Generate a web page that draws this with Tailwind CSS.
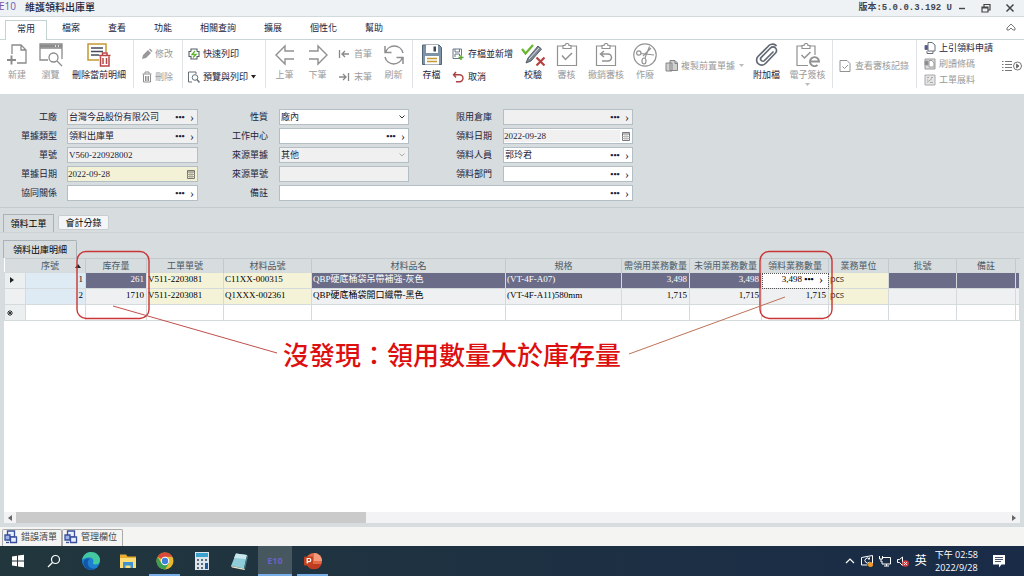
<!DOCTYPE html>
<html lang="zh-Hant">
<head>
<meta charset="utf-8">
<title>維護領料出庫單</title>
<script src="https://cdn.jsdelivr.net/npm/@tailwindcss/browser@4"></script>
</head>
<body class="relative flex h-screen flex-col overflow-hidden bg-[#d7dcde] font-['Liberation_Serif','Noto_Sans_CJK_TC',sans-serif] text-[9px] leading-3 text-[#22233a]">

<!-- Title bar -->
<header class="flex h-[17px] shrink-0 items-center border-b border-[#d3dadc] bg-[#eef2f4]">
  <span class="-ml-px mb-1 w-[26px] font-['Open_Sans'] text-[10px] text-[#6a5cae]">E10</span>
  <h1 class="text-[10px] font-medium">維護領料出庫單</h1>
  <span class="ml-auto whitespace-pre font-['Liberation_Mono','Noto_Sans_CJK_TC',monospace] font-bold text-[#44454f]">版本:5.0.0.3.192 U</span>
  <div class="ml-1 mr-2 flex items-center gap-3 text-[#444]">
    <button aria-label="最小化"><svg class="size-3" viewBox="0 0 12 12" fill="none" stroke="currentColor" stroke-width="1.4"><path d="M3 6.500h6"/></svg></button>
    <button aria-label="還原"><svg class="size-3" viewBox="0 0 12 12" fill="none" stroke="currentColor" stroke-width="1.2"><path d="M2 5h6v5H2zM4 5V2.500h6V8H8M2 5.800h6"/></svg></button>
    <button aria-label="關閉"><svg class="size-3" viewBox="0 0 12 12" fill="none" stroke="currentColor" stroke-width="1.5"><path d="M2.500 2.500l7 7M9.500 2.500l-7 7"/></svg></button>
  </div>
</header>

<!-- Ribbon tabs -->
<nav class="flex h-[23px] shrink-0 items-stretch border-b border-[#c9d5d7] bg-white pl-[5px] pr-2">
  <button class="-mb-px mt-[3px] w-[42px] border border-b-0 border-[#c3d3d0] bg-white pb-[3px]">常用</button>
  <div class="ml-[15px] flex items-center gap-7">
    <button>檔案</button><button>查看</button><button>功能</button><button>相關查詢</button><button>擴展</button><button>個性化</button><button>幫助</button>
  </div>
  <button class="ml-auto" aria-label="收合功能區"><svg class="h-3 w-2.5" viewBox="0 0 10 12" fill="none" stroke="#777" stroke-width="1"><path d="M1 6l4-4 4 4v2L7 8 5 6 3 8 1 8z"/></svg></button>
</nav>

<!-- Ribbon -->
<div class="flex h-[54px] shrink-0 items-start overflow-hidden whitespace-nowrap bg-white">
  <button class="flex w-[34px] flex-col items-center gap-0.5 pt-[3px] text-[#9a9a9a]">
    <svg class="size-6" viewBox="0 0 24 24" fill="none" stroke="#8b8b8b" stroke-width="1.300"><path d="M7 11V2h9l5 5v13H12M16 2v5h5"/><path d="M2 17h9M6.500 12.500v9" stroke-width="1.900"/></svg>新建</button>
  <button class="flex w-[33px] flex-col items-center gap-0.5 pt-[3px] text-[#9a9a9a]">
    <svg class="size-6" viewBox="0 0 24 24" fill="none" stroke="#8b8b8b" stroke-width="1.300"><path d="M9 17H1V1h22v15M1 5h22"/><path d="M1 3h22" stroke-width="3"/><path d="M16 3h1M19 3h1" stroke="#fff"/><circle cx="14.500" cy="14.500" r="4.500"/><path d="M18 18l5 5"/></svg>瀏覽</button>
  <button class="flex w-[64px] flex-col items-center gap-0.5 pt-[3px]">
    <svg class="size-6" viewBox="0 0 24 24" fill="none"><path d="M12 17H1V1h18v8" stroke="#c49a35" stroke-width="1.500"/><path d="M4 5h12M4 8.500h12M4 12h8" stroke="#454b5c" stroke-width="1.400"/><path d="M12 12.500h11.500M15.500 12v-2h4.500v2M13.500 13.500v9.500h8.500v-9.500M16 15v6M19.500 15v6" stroke="#b84545" stroke-width="1.500"/></svg>刪除當前明細</button>
  <i class="ml-[2px] h-12 w-px bg-[#e0e3e5]"></i>
  <div class="ml-[7px] flex w-[41px] flex-col items-start gap-[11px] pt-2 text-[#9a9a9a]">
    <button class="flex h-3 items-center gap-0.5"><svg class="size-3" viewBox="0 0 12 12" fill="#999"><path d="M1 11l1-4 5-5 3 3-5 5zM8 1.500l1-1 2.500 2.500-1 1z"/></svg>修改</button>
    <button class="flex h-3 items-center gap-0.5"><svg class="size-3" viewBox="0 0 12 12" fill="none" stroke="#8d8d8d"><path d="M1.500 3h9M4 2.500V1h4v1.500M2.500 3.500v7.500h7V3.500M4.500 5v5M6 5v5M7.500 5v5"/></svg>刪除</button>
  </div>
  <i class="h-12 w-px bg-[#e0e3e5]"></i>
  <div class="ml-[5px] flex w-[77px] flex-col items-start gap-[11px] pt-2">
    <button class="flex h-3 items-center gap-[3px]"><svg class="size-3" viewBox="0 0 12 12" fill="none" stroke="#555e68" stroke-width="1.100"><path d="M3 3.500V1h6v2.500M3 3.500H1v5h2V11h6V8.500h2v-5H9"/><path d="M7 3L4 6.500h4L5 9.500" stroke="#62b32e" stroke-width="1.300"/></svg>快速列印</button>
    <button class="flex h-3 items-center gap-[3px]"><svg class="size-3" viewBox="0 0 12 12" fill="none" stroke="#666e75"><path d="M4 11H.500V1H8v2"/><circle cx="7" cy="6.500" r="2.800"/><path d="M9 8.500l2.500 3" stroke-width="1.500"/></svg>預覽與列印<svg class="h-1 w-[5px]" viewBox="0 0 5 4"><path d="M0 0h5L2.500 3.500z" fill="#222"/></svg></button>
  </div>
  <i class="h-12 w-px bg-[#e0e3e5]"></i>
  <button class="ml-[2px] flex w-[33px] flex-col items-center gap-0.5 pt-[3px] text-[#9a9a9a]">
    <svg class="size-6" viewBox="0 0 24 24" fill="none" stroke="#919191" stroke-width="1.400"><path d="M21 8h-9V3L3 12l9 9v-5h9"/></svg>上筆</button>
  <button class="flex w-[33px] flex-col items-center gap-0.5 pt-[3px] text-[#9a9a9a]">
    <svg class="size-6" viewBox="0 0 24 24" fill="none" stroke="#919191" stroke-width="1.400"><path d="M3 8h9V3l9 9-9 9v-5H3"/></svg>下筆</button>
  <div class="ml-[4px] flex w-[41px] flex-col items-start gap-[11px] pt-2 text-[#9a9a9a]">
    <button class="flex h-3 items-center gap-1"><svg class="size-3" viewBox="0 0 12 12" fill="none" stroke="#888" stroke-width="1.300"><path d="M1.500 2v8M11 6H4M7 3L4 6l3 3"/></svg>首筆</button>
    <button class="flex h-3 items-center gap-1"><svg class="size-3" viewBox="0 0 12 12" fill="none" stroke="#888" stroke-width="1.300"><path d="M10.500 2v8M1 6h7M5 3l3 3-3 3"/></svg>末筆</button>
  </div>
  <button class="flex w-[29px] flex-col items-center gap-0.5 pt-[3px] text-[#9a9a9a]">
    <svg class="size-6" viewBox="0 0 24 24" fill="none" stroke="#8f8f8f" stroke-width="1.500"><path d="M3.500 10a9 9 0 0 1 17.500 0M20.500 14a9 9 0 0 1-17.500 0M3 3v6.500h6.500M21 21v-6.500h-6.500"/></svg>刷新</button>
  <i class="ml-[4px] h-12 w-px bg-[#e0e3e5]"></i>
  <button class="flex w-[37px] flex-col items-center gap-0.5 pt-[3px]">
    <svg class="size-6" viewBox="0 0 24 24"><path d="M2.500 2h16.500l2.500 2.500V21.500h-19z" fill="#7d93a8" stroke="#536577"/><path d="M6 2h12v8H6zM5 13h14v8.500H5z" fill="#fff"/><path d="M13.500 3.500h2.500v5h-2.500z" fill="#3e4658"/><path d="M7 15.500h10M7 18.500h10" stroke="#c49a35" stroke-width="1.300"/></svg>存檔</button>
  <div class="ml-[2px] flex w-[66px] flex-col items-start gap-[11px] pt-2">
    <button class="flex h-3 items-center gap-1"><svg class="size-3" viewBox="0 0 12 12" fill="none" stroke="#6a7888"><path d="M8 10.500H1V1h8.500v6M3 1v3h4.500V1M3 9V6h4.500v2"/><path d="M9 7v5M6.500 9.500h5" stroke="#58a82c" stroke-width="1.500"/></svg>存檔並新增</button>
    <button class="flex h-3 items-center gap-1"><svg class="size-3" viewBox="0 0 12 12" fill="none" stroke="#ad4040" stroke-width="1.400"><path d="M4 1L1.500 3.700 4 6.500M2 3.700h5.500a3.500 3.500 0 0 1 0 7H4"/></svg>取消</button>
  </div>
  <button class="flex w-[30px] flex-col items-center gap-0.5 pt-[3px]">
    <svg class="size-6" viewBox="0 0 24 24" fill="none"><path d="M5 20l2-5L17 3l3.500 3L10 18z" fill="#7c8794" stroke="#56606d"/><path d="M8 16L18 5" stroke="#dce1e5"/><path d="M1 6l3.500 4.500L12 2" stroke="#68b52f" stroke-width="2.200"/><path d="M15.500 14.500l8 8M23.500 14.500l-8 8" stroke="#b64141" stroke-width="2.200"/></svg>校驗</button>
  <button class="flex w-[37px] flex-col items-center gap-0.5 pt-[3px] text-[#9a9a9a]">
    <svg class="size-6" viewBox="0 0 24 24" fill="none" stroke="#929292" stroke-width="1.200"><path d="M8 3H2.500v19.500h19V3H16M8 2.500h2a2 2 0 0 1 4 0h2v3H8z"/><path d="M7 12.500l3.500 4 6.500-6.500" stroke-width="1.500"/></svg>審核</button>
  <button class="flex w-[42px] flex-col items-center gap-0.5 pt-[3px] text-[#9a9a9a]">
    <svg class="size-6" viewBox="0 0 24 24" fill="none" stroke="#929292" stroke-width="1.200"><path d="M8 3H2.500v19.500h19V3H16M8 2.500h2a2 2 0 0 1 4 0h2v3H8z"/><path d="M10 8l-3.500 3 3.500 3M7 11h7a3.500 3.500 0 0 1 0 7H8" stroke-width="1.500"/></svg>撤銷審核</button>
  <button class="flex w-[36px] flex-col items-center gap-0.5 pt-[3px] text-[#9a9a9a]">
    <svg class="size-6" viewBox="0 0 24 24" fill="none" stroke="#929292" stroke-width="1.200"><circle cx="12" cy="12" r="11.200"/><circle cx="5.800" cy="10" r="2.200"/><ellipse cx="11" cy="18" rx="2" ry="3"/><path d="M8 10.500l13 1.500M12 15L16.500 3.500M10 13l8-8"/></svg>作廢</button>
  <button class="ml-0.5 mt-5 flex h-3 w-[85px] items-center gap-0.5 text-[#9a9a9a]"><svg class="size-3.5" viewBox="0 0 14 14" fill="#d0d0d0" stroke="#858585"><path d="M1 4h6v8H1zM5 1.500h5l2.500 2.500v7.500H5z"/><path d="M10 2v2.500h2.500" fill="none"/></svg>複製前置單據<svg class="ml-0.5 h-1 w-[5px]" viewBox="0 0 5 4"><path d="M0 0h5L2.500 3z" fill="#bbb"/></svg></button>
  <button class="flex w-[33px] flex-col items-center gap-0.5 pt-[3px]">
    <svg class="size-6" viewBox="0 0 24 24" fill="none" stroke="#606873" stroke-width="1.700" stroke-linecap="round"><path d="M18 9l-8.500 8.500a2.200 2.200 0 0 1-3.200-3.200L15.500 5a3.500 3.500 0 0 1 5 5l-10 10.500a5 5 0 0 1-7.500-7L13 3.500a5.500 5.500 0 0 1 8-1"/></svg>附加檔</button>
  <button class="flex w-[49px] flex-col items-center gap-0.5 pt-[3px] text-[#9a9a9a]">
    <svg class="size-6" viewBox="0 0 24 24" fill="none" stroke="#929292" stroke-width="1.200"><path d="M6 3H1v19.500h11M14 3h5v9M6 2.500h2a2 2 0 0 1 4 0h2v3H6z"/><path d="M5.500 12l3 3 6-6" stroke-width="1.500"/><path d="M14 18.500h9a4.500 4.500 0 1 0-1.500 3.500" stroke-width="1.900"/></svg>電子簽核<svg class="h-1 w-[5px]" viewBox="0 0 5 4"><path d="M0 0h5L2.500 3z" fill="#bbb"/></svg></button>
  <i class="h-12 w-px bg-[#e0e3e5]"></i>
  <button class="ml-[6px] mt-5 flex h-3 w-[77px] items-center gap-1 text-[#9a9a9a]"><svg class="size-3" viewBox="0 0 12 12" fill="none" stroke="#929292"><path d="M1 .500h7L11 3.500v8H1z"/><path d="M3.500 6.500l2 2L9 5"/></svg>查看審核記錄</button>
  <i class="h-12 w-px bg-[#e0e3e5]"></i>
  <div class="ml-[7px] flex flex-col items-start gap-1 pt-0.5">
    <button class="flex h-3 items-center gap-[3px]"><svg class="size-3" viewBox="0 0 12 12" fill="#fff" stroke="#666e76"><path d="M4 .500h4L11 3v6H4z"/><path d="M1 3.500h2.500v4H1z" fill="#54549a"/><path d="M3 9v2.500h6V9" fill="none"/></svg>上引領料申請</button>
    <button class="flex h-3 items-center gap-[3px] text-[#9a9a9a]"><svg class="size-3" viewBox="0 0 12 12" fill="#ddd" stroke="#999"><path d="M1 1h10v10H1z"/><path d="M5 2.500h3L10 5v4H5z" fill="#fff"/><path d="M1 3h3v4H1z" fill="#888"/></svg>刷讀條碼</button>
    <button class="flex h-3 items-center gap-[3px] text-[#9a9a9a]"><svg class="size-3" viewBox="0 0 12 12" fill="#e5e5e5" stroke="#aaa"><path d="M1 1h10v10H1z"/><path d="M3 3.500h2M7 3.500h2M3 8.500l5-4M6 8.500h3M3 6h1" fill="none"/></svg>工單展料</button>
  </div>
  <button class="ml-auto mr-0.5 mt-[18px]" aria-label="更多功能"><svg class="h-4 w-5" viewBox="0 0 20 16" fill="none" stroke="#777"><path d="M0 3.500h1.500M3 3.500h7M0 6.500h1.500M3 6.500h7M0 9.500h1.500M3 9.500h7M0 12.500h1.500M3 12.500h7"/><circle cx="15.500" cy="8" r="4" fill="#fff"/><path d="M14.500 6l2.500 2-2.500 2z" fill="#555"/></svg></button>
</div>

<!-- Header form -->
<form class="flex h-[114px] shrink-0 items-start border-b border-[#c4cbce] pt-[15px]">
  <div class="grid w-[198px] grid-cols-[57px_minmax(0,1fr)] items-center gap-x-2.5 gap-y-[3px] text-right">
    <label for="f1">工廠</label>
    <div class="flex h-4 items-center border border-[#b3bfc4] bg-[#f0f0f0]"><input id="f1" class="min-w-0 flex-1 pl-px outline-none" value="台灣今品股份有限公司"><button type="button" class="w-3.5 font-bold" aria-label="選擇">•••</button><button type="button" class="w-2.5 text-center text-[12px]" aria-label="開啟">›</button></div>
    <label for="f2">單據類型</label>
    <div class="flex h-4 items-center border border-[#b3bfc4] bg-[#f0f0f0]"><input id="f2" class="min-w-0 flex-1 pl-px outline-none" value="領料出庫單"><button type="button" class="w-3.5 font-bold" aria-label="選擇">•••</button><button type="button" class="w-2.5 text-center text-[12px]" aria-label="開啟">›</button></div>
    <label for="f3">單號</label>
    <input id="f3" class="h-4 w-full min-w-0 border border-[#b3bfc4] bg-[#f0f0f0] pl-px outline-none" value="V560-220928002">
    <label for="f4">單據日期</label>
    <div class="flex h-4 items-center border border-[#b3bfc4] bg-[#f3f2d7]"><input id="f4" class="min-w-0 flex-1 outline-none" value="2022-09-28"><button type="button" class="mr-0.5" aria-label="選擇日期"><svg class="h-2.5 w-2" viewBox="0 0 8 10" fill="none" stroke="#77776c"><path d="M.5 1.500h7v8h-7zM.5 3h7"/><path d="M.5 5.500h7M.5 7.500h7M3 3v6M5 3v6" stroke="#a5a596"/></svg></button></div>
    <label for="f5">協同關係</label>
    <div class="flex h-4 items-center border border-[#b3bfc4] bg-white"><input id="f5" class="min-w-0 flex-1 outline-none"><button type="button" class="w-3.5 font-bold" aria-label="選擇">•••</button><button type="button" class="w-2.5 text-center text-[12px]" aria-label="開啟">›</button></div>
  </div>
  <div class="grid w-[435px] grid-cols-[70px_130px_72px_130px] items-center gap-x-[11px] gap-y-[3px] text-right">
    <label for="f6">性質</label>
    <div class="relative h-4"><select id="f6" class="block h-4 w-full appearance-none border border-[#b3bfc4] bg-white pl-px outline-none"><option>廠內</option></select><svg class="pointer-events-none absolute right-1 top-1.5 h-1 w-1.5" viewBox="0 0 6 4" fill="none" stroke="#333"><path d="M.5.500L3 3 5.500.500"/></svg></div>
    <label for="f7">限用倉庫</label>
    <div class="flex h-4 items-center border border-[#b3bfc4] bg-[#f0f0f0]"><input id="f7" class="min-w-0 flex-1 outline-none"><button type="button" class="w-3.5 font-bold" aria-label="選擇">•••</button><button type="button" class="w-2.5 text-center text-[12px]" aria-label="開啟">›</button></div>
    <label for="f8">工作中心</label>
    <div class="flex h-4 items-center border border-[#b3bfc4] bg-white"><input id="f8" class="min-w-0 flex-1 outline-none"><button type="button" class="w-3.5 font-bold" aria-label="選擇">•••</button><button type="button" class="w-2.5 text-center text-[12px]" aria-label="開啟">›</button></div>
    <label for="f9">領料日期</label>
    <div class="flex h-4 items-center border border-[#b3bfc4] bg-white"><input id="f9" class="mr-0.5 h-3 min-w-0 flex-1 bg-[#f0f0f0] outline-none" value="2022-09-28"><button type="button" class="mr-0.5" aria-label="選擇日期"><svg class="h-2.5 w-2" viewBox="0 0 8 10" fill="none" stroke="#77777c"><path d="M.5 1.500h7v8h-7zM.5 3h7"/><path d="M.5 5.500h7M.5 7.500h7M3 3v6M5 3v6" stroke="#bbb"/></svg></button></div>
    <label for="f10">來源單據</label>
    <div class="relative h-4"><select id="f10" class="block h-4 w-full appearance-none border border-[#b3bfc4] bg-[#f0f0f0] pl-px outline-none"><option>其他</option></select><svg class="pointer-events-none absolute right-1 top-1.5 h-1 w-1.5" viewBox="0 0 6 4" fill="none" stroke="#aaa"><path d="M.5.500L3 3 5.500.500"/></svg></div>
    <label for="f11">領料人員</label>
    <div class="flex h-4 items-center border border-[#b3bfc4] bg-white"><input id="f11" class="min-w-0 flex-1 pl-px outline-none" value="郭玲君"><button type="button" class="w-3.5 font-bold" aria-label="選擇">•••</button><button type="button" class="w-2.5 text-center text-[12px]" aria-label="開啟">›</button></div>
    <label for="f12">來源單號</label>
    <input id="f12" class="h-4 w-full min-w-0 border border-[#b3bfc4] bg-[#f0f0f0] outline-none">
    <label for="f13">領料部門</label>
    <div class="flex h-4 items-center border border-[#b3bfc4] bg-white"><input id="f13" class="min-w-0 flex-1 outline-none"><button type="button" class="w-3.5 font-bold" aria-label="選擇">•••</button><button type="button" class="w-2.5 text-center text-[12px]" aria-label="開啟">›</button></div>
    <label for="f14">備註</label>
    <div class="col-span-3 flex h-4 items-center border border-[#b3bfc4] bg-white"><input id="f14" class="min-w-0 flex-1 outline-none"><button type="button" class="w-3.5 font-bold" aria-label="選擇">•••</button><button type="button" class="w-2.5 text-center text-[12px]" aria-label="開啟">›</button></div>
  </div>
</form>

<!-- Detail tabs -->
<div class="flex h-[25px] shrink-0 items-end gap-1 border-b border-[#cdd4d6] pl-[3px] text-black">
  <button class="h-[18px] w-[51px] border border-b-0 border-[#a9b2b6]">領料工單</button>
  <button class="mb-0.5 h-[15px] w-[51px] rounded-xs border border-[#c7cdd0] bg-[#f3f5f6]">會計分錄</button>
</div>
<div class="flex h-[25px] shrink-0 items-end pl-[3px] text-black">
  <button class="h-[18px] w-[74px] rounded-tr-xs border border-b-0 border-[#a9b2b6]">領料出庫明細</button>
</div>

<!-- Detail grid -->
<main class="mx-1 flex min-h-0 flex-1 flex-col overflow-hidden bg-white">
  <table class="w-full table-fixed border-collapse whitespace-nowrap text-black">
    <colgroup><col class="w-[21px]"><col class="w-[60px]"><col class="w-[61px]"><col class="w-[77px]"><col class="w-[88px]"><col class="w-[194px]"><col class="w-[116px]"><col class="w-[68px]"><col class="w-[72px]"><col class="w-[67px]"><col class="w-[60px]"><col class="w-[68px]"><col class="w-[59px]"><col></colgroup>
    <thead>
      <tr class="h-[14px] border-t border-[#c3cace] bg-[#d7dcde] text-[#4a5966] [&>th]:p-0 [&>th]:font-normal">
        <th></th>
        <th><div class="flex items-center justify-end gap-4 pr-1">序號<svg class="h-1 w-1.5" viewBox="0 0 6 4"><path d="M0 4h6L3 0z" fill="#222"/></svg></div></th>
        <th class="border-x border-[#c3cace]">库存量</th>
        <th class="border-x border-[#c3cace]">工單單號</th>
        <th class="border-x border-[#c3cace]">材料品號</th>
        <th class="border-x border-[#c3cace]">材料品名</th>
        <th class="border-x border-[#c3cace]">規格</th>
        <th class="border-x border-[#c3cace]">需領用業務數量</th>
        <th class="border-x border-[#c3cace]">未領用業務數量</th>
        <th class="border-x border-[#c3cace]">領料業務數量</th>
        <th class="border-x border-[#c3cace]">業務單位</th>
        <th class="border-x border-[#c3cace]">批號</th>
        <th class="border-x border-[#c3cace]">備註</th>
        <th></th>
      </tr>
    </thead>
    <tbody>
      <tr class="h-4 bg-[#6a6c88] text-white [&>td]:border [&>td]:border-[#d5dadd] [&>td]:py-0 [&>td]:pl-px [&>td]:pr-0.5 [&>td]:align-top">
        <td class="bg-[#eceff0]"><svg class="ml-1 mt-1 h-1.5 w-1" viewBox="0 0 4 6"><path d="M0 0v6l4-3z" fill="#222"/></svg></td>
        <td class="bg-[#deebf5] text-right text-black">1</td>
        <td class="text-right">261</td>
        <td class="bg-[#f4f3d8] text-black">V511-2203081</td>
        <td class="bg-[#f4f3d8] text-black">C11XX-000315</td>
        <td>QBP硬底桶袋吊帶補強-灰色</td>
        <td>(VT-4F-A07)</td>
        <td class="text-right">3,498</td>
        <td class="text-right">3,498</td>
        <td class="bg-white text-black outline-1 -outline-offset-1 outline-dotted outline-[#555]"><div class="flex items-center"><input aria-label="領料業務數量" class="h-3 min-w-0 flex-1 text-right outline-none" value="3,498"><button class="w-3.5 font-bold" aria-label="選擇">•••</button><button class="w-2.5 text-[12px]" aria-label="開啟">›</button></div></td>
        <td class="bg-[#f4f3d8] font-['Open_Sans'] text-[#333]">pcs</td>
        <td></td><td></td><td></td>
      </tr>
      <tr class="h-4 bg-[#eef0f2] [&>td]:border [&>td]:border-[#d5dadd] [&>td]:py-0 [&>td]:pl-px [&>td]:pr-0.5 [&>td]:align-top">
        <td></td>
        <td class="bg-[#deebf5] text-right">2</td>
        <td class="text-right">1710</td>
        <td class="bg-[#f4f3d8]">V511-2203081</td>
        <td class="bg-[#f4f3d8]">Q1XXX-002361</td>
        <td>QBP硬底桶袋開口織帶-黑色</td>
        <td>(VT-4F-A11)580mm</td>
        <td class="text-right">1,715</td>
        <td class="text-right">1,715</td>
        <td class="text-right">1,715</td>
        <td class="bg-[#f4f3d8] font-['Open_Sans'] text-[#333]">pcs</td>
        <td></td><td></td><td></td>
      </tr>
      <tr class="h-4 [&>td]:border [&>td]:border-[#d5dadd] [&>td]:py-0 [&>td]:pl-px [&>td]:pr-0.5">
        <td class="bg-[#eceff0]"><svg class="ml-px size-1.5" viewBox="0 0 6 6" stroke="#333"><path d="M3 0v6M0 3h6M1 1l4 4M5 1L1 5"/></svg></td>
        <td></td><td></td><td></td><td></td><td></td><td></td><td></td><td></td><td></td><td></td><td></td><td></td><td></td>
      </tr>
    </tbody>
  </table>
  <div class="mt-auto flex h-[11px] shrink-0 items-stretch bg-[#f3f3f5]">
    <button class="flex w-3 items-center justify-center" aria-label="向左捲動"><svg class="h-1.5 w-1" viewBox="0 0 4 6"><path d="M4 0v6L0 3z" fill="#666"/></svg></button>
    <div class="w-[350px] bg-[#cacaca]"></div>
    <button class="ml-auto flex w-3 items-center justify-center" aria-label="向右捲動"><svg class="h-1.5 w-1" viewBox="0 0 4 6"><path d="M0 0v6l4-3z" fill="#666"/></svg></button>
  </div>
</main>

<!-- Dock tabs -->
<div class="mt-1 flex h-[19px] shrink-0 items-end bg-[#f4f4f3] pl-0.5 text-[#444]">
  <button class="flex h-[17px] w-[60px] items-center gap-[3px] rounded-t-xs border border-b-0 border-[#aaa] pb-0.5 pl-px"><svg class="size-3.5 shrink-0" viewBox="0 0 14 14" fill="#e8eefc" stroke="#3a4f9c" stroke-width="1.300"><path d="M3.500 1h7v6h-7z"/><path d="M1 5h5v5H1z" fill="#9db4ea"/><path d="M6.500 7h6v5.500h-6z"/><path d="M2 12.500h3"/></svg>錯誤清單</button>
  <button class="flex h-[17px] w-[61px] items-center gap-[3px] rounded-t-xs border border-b-0 border-[#aaa] pb-0.5 pl-px"><svg class="size-3.5 shrink-0" viewBox="0 0 14 14" fill="#e8eefc" stroke="#3a4f9c" stroke-width="1.300"><path d="M3.500 1h7v6h-7z"/><path d="M1 5h5v5H1z" fill="#9db4ea"/><path d="M6.500 7h6v5.500h-6z"/><path d="M2 12.500h3"/></svg>管理欄位</button>
</div>

<!-- Taskbar -->
<footer class="flex h-[30px] shrink-0 items-stretch bg-linear-to-r from-[#22363d] to-[#192b47] text-white [&>button]:flex [&>button]:items-center [&>button]:justify-center">
  <button class="w-[35px]" aria-label="開始"><svg class="size-3.5" viewBox="0 0 14 14" fill="#fff"><path d="M1 2.500l5-.700v4.700H1zM7 1.600L13 .800v5.700H7zM1 7.500h5v4.700l-5-.700zM7 7.500h6v5.700l-6-.800z"/></svg></button>
  <button class="w-[37px]" aria-label="搜尋"><svg class="size-3.5" viewBox="0 0 14 14" fill="none" stroke="#fff" stroke-width="1.200"><circle cx="8.500" cy="5.500" r="4"/><path d="M5.500 8.500L1 13"/></svg></button>
  <button class="w-[37px]" aria-label="Edge"><svg class="size-5" viewBox="0 0 20 20"><circle cx="10" cy="10" r="9" fill="#1d7fd0"/><path d="M1.200 9C2 3.500 6 1 10 1c5 0 9 3.500 9 8 0 3-2 4.500-4.500 4.500-2 0-3-.8-2.500-2 1.500-3-1-5-4-5-3 0-5.500 1-6.800 2.500z" fill="#43c8a0"/><path d="M7 10c-1.500 4 2 8.500 7.500 7.500C11 20 4 19 2.500 13 2 10 4 7.500 7.500 7.500 9.500 7.500 7.500 8.500 7 10z" fill="#1256a5"/></svg></button>
  <button class="w-[37px]" aria-label="檔案總管"><svg class="h-4 w-[18px]" viewBox="0 0 18 16"><path d="M1 1.500h6l1.500 2H17V15H1z" fill="#eaae31"/><path d="M1 5h16v10H1z" fill="#fbdc76"/><path d="M4 9h10v6h-2.500v-2.500h-5V15H4z" fill="#3f93d3"/></svg></button>
  <button class="mx-[3px] w-[31px] border-b-2 border-[#78aee8] pt-0.5" aria-label="Chrome"><svg class="size-[18px]" viewBox="0 0 18 18"><circle cx="9" cy="9" r="8.500" fill="#e7b92e"/><path d="M9 9L1.600 4.800A8.500 8.500 0 0 1 16.400 4.800H9z" fill="#d94a3a"/><path d="M1.600 4.800A8.500 8.500 0 0 0 9 17.500l4-6.500-8-.500z" fill="#3a9e54"/><circle cx="9" cy="9" r="4.200" fill="#fff"/><circle cx="9" cy="9" r="3.200" fill="#3f80de"/></svg></button>
  <button class="w-[37px]" aria-label="小算盤"><svg class="h-[18px] w-3.5" viewBox="0 0 14 18"><path d="M0 0h14v18H0z" fill="#dce5eb"/><path d="M1 1h12v4H1z" fill="#3aa0cf"/><path d="M2 7h2v2H2zM6 7h2v2H6zM10 7h2v2h-2zM2 11h2v2H2zM6 11h2v2H6zM2 15h2v2H2zM6 15h2v2H6z" fill="#5b6b7a"/><path d="M10 11h3v6h-3z" fill="#1e5b9d"/></svg></button>
  <button class="w-[37px]" aria-label="記事本"><svg class="size-[18px]" viewBox="0 0 18 18"><path d="M6 1.500L17 3l-3 13.500L1 14z" fill="#8fcbd8"/><path d="M6 1.500L17 3l-1 4L4 6z" fill="#c9e7ec"/><path d="M1 14l13 2.500 1 .5-.5 1L2 15.500z" fill="#e8e1c8"/><path d="M14 16.500L17 3l1 1-3 13z" fill="#527b8b"/></svg></button>
  <button class="ml-px w-[34px] border-b-2 border-[#78aee8] bg-[#46575f] pt-0.5 font-['Open_Sans'] font-bold text-[#6c62c4]">E10</button>
  <button class="ml-[5px] w-[31px] border-b-2 border-[#78aee8] pt-0.5" aria-label="PowerPoint"><svg class="size-[18px]" viewBox="0 0 18 18"><circle cx="10" cy="9" r="8" fill="#e26a47"/><path d="M10 1a8 8 0 0 1 8 8h-8z" fill="#f29a7b"/><path d="M2.500 12a8 8 0 0 0 15 0z" fill="#bf3c22"/><rect y="4.500" width="9" height="9" rx="1" fill="#c3401f"/><path d="M3.200 11.500v-5h2a1.500 1.500 0 0 1 0 3.200h-2" fill="none" stroke="#fff" stroke-width="1.200"/></svg></button>
  <div class="ml-auto flex items-center gap-1.5">
    <button aria-label="顯示隱藏的圖示"><svg class="h-3 w-2.5" viewBox="0 0 10 12" fill="none" stroke="#fff" stroke-width="1.200"><path d="M1 8l4-4 4 4"/></svg></button>
    <svg class="h-3.5 w-3" viewBox="0 0 12 14" fill="none" stroke="#fff"><path d="M.5 3.500L11.500 1.500v8M.5 3.500v7.500h6"/><path d="M8.500 5a2.500 2.500 0 1 0 0 3M8.500 3.500V5H7"/><circle cx="9.500" cy="10.500" r="2.500" fill="#f09a28" stroke="none"/></svg>
    <svg class="h-3 w-3" viewBox="0 0 12 12" fill="none" stroke="#fff"><path d="M4 2.500h7.500V9H3V6M5 11h5M7.500 9v2M.5 1v3h3V1M2 4v3"/></svg>
    <svg class="h-3 w-3" viewBox="0 0 12 12" fill="none" stroke="#fff"><path d="M.5 4.500h2L5.500 2v8.500L2.500 7.500h-2z"/><circle cx="8.500" cy="8.500" r="3.300" fill="#d63a40" stroke="none"/><path d="M7.200 7.200l2.600 2.600M9.800 7.200L7.200 9.800"/></svg>
    <span class="text-[12px] leading-4">英</span>
    <div class="ml-0.5 text-center font-['Open_Sans','Noto_Sans_CJK_TC',sans-serif] leading-[13px]"><div>下午 02:58</div><div>2022/9/28</div></div>
    <button class="ml-2 mr-[18px]" aria-label="通知"><svg class="size-3.5" viewBox="0 0 14 14"><path d="M1 1h12v9.500H9.500L7 13.500V10.500H1z" fill="#fff"/><path d="M3 3.500h8M3 5.500h8M3 7.500h6" stroke="#1b2d45" stroke-width=".8"/></svg></button>
  </div>
</footer>

<!-- Annotations lying over the grid -->
<svg class="pointer-events-none absolute left-0 top-0 h-[576px] w-[1024px]" viewBox="0 0 1024 576" fill="none">
  <rect x="77" y="251.500" width="72" height="67" rx="9" stroke="#c93535" stroke-width="1.400"/>
  <rect x="760" y="251.500" width="72" height="67" rx="9" stroke="#c93535" stroke-width="1.400"/>
  <path d="M113 306l164 47" stroke="#c0504d" stroke-width="1"/>
  <path d="M629 354l156-57" stroke="#bd7256" stroke-width="1"/>
</svg>
<p class="absolute left-[283px] top-[338px] whitespace-nowrap font-['Noto_Sans_CJK_TC',sans-serif] text-[26px] font-medium leading-8 text-[#dd0f0f]">沒發現：領用數量大於庫存量</p>
</body>
</html>
